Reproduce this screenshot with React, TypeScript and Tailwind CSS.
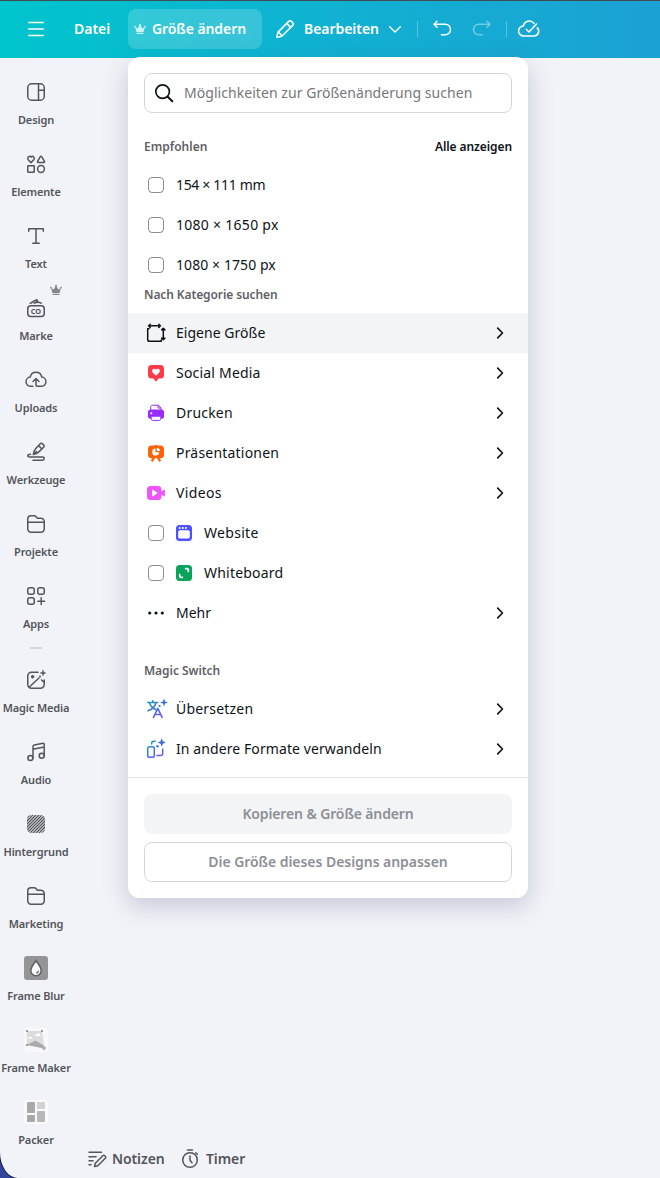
import { ReactNode } from 'react';
import clsx from 'clsx';

const Svg = ({ children, size = 24, className = '' }: { children: ReactNode; size?: number; className?: string }) => (
  <svg
    width={size}
    height={size}
    viewBox="0 0 24 24"
    fill="none"
    stroke="currentColor"
    strokeWidth={1.5}
    strokeLinecap="round"
    strokeLinejoin="round"
    className={clsx('shrink-0', className)}
  >
    {children}
  </svg>
);

const Crown = ({ className }: { className?: string }) => (
  <svg width="12" height="12" viewBox="0 0 12 12" fill="currentColor" className={clsx('shrink-0', className)}>
    <path d="M2.400 9 1.100 3.800 3.700 5.600 5.500 2.200h1L8.300 5.600l2.600-1.800L9.600 9z" />
    <circle cx="1" cy="3.600" r=".9" />
    <circle cx="6" cy="1.800" r="1" />
    <circle cx="11" cy="3.600" r=".9" />
    <rect x="2.500" y="9.800" width="7" height="1.200" rx=".5" />
  </svg>
);

const FolderIcon = () => (
  <Svg>
    <path d="M3.750 17V7A3.250 3.250 0 0 1 7 3.750h3.200c.7 0 1.300.3 1.700.8l1 1.200c.3.4.8.6 1.300.6H17A3.250 3.250 0 0 1 20.250 9.600V17A3.250 3.250 0 0 1 17 20.250H7A3.250 3.250 0 0 1 3.750 17zM3.750 10.300h16.500" />
  </Svg>
);

const Hatch = () => (
  <svg width="24" height="24" viewBox="0 0 24 24" fill="none" stroke="currentColor" strokeWidth="1.300">
    <defs>
      <clipPath id="hatch">
        <rect x="3" y="3" width="18" height="18" rx="4.500" />
      </clipPath>
    </defs>
    <path
      clipPath="url(#hatch)"
      d="M0 9 9 0M0 12 12 0M0 15 15 0M0 18 18 0M0 21 21 0M0 24 24 0M3 24 24 3M6 24 24 6M9 24 24 9M12 24 24 12M15 24 24 15"
    />
  </svg>
);

type Item = { label: string; icon: ReactNode; crown?: boolean };

const mainItems: Item[] = [
  {
    label: 'Design',
    icon: (
      <Svg>
        <rect x="3.750" y="3.750" width="16.500" height="16.500" rx="4" />
        <path d="M14.500 3.750v16.500M14.500 10.300h5.750" />
      </Svg>
    ),
  },
  {
    label: 'Elemente',
    icon: (
      <Svg>
        <path d="M7 10.600 4.200 7.800C2.700 6 5 2.900 7 5.100 9 2.900 11.300 6 9.800 7.800zM16.300 4.600l-2.700 4.700c-.3.6 0 1.100.6 1.100h5.600c.6 0 .9-.5.6-1.100l-2.700-4.700c-.3-.6-1.100-.6-1.400 0z" />
        <rect x="3.750" y="13.750" width="6.500" height="6.500" rx=".4" />
        <circle cx="17" cy="17" r="3.400" />
      </Svg>
    ),
  },
  {
    label: 'Text',
    icon: (
      <Svg>
        <path d="M4.700 7.300V4.800h14.600v2.500M12 4.800v14.500M8.800 19.300h6.400" />
      </Svg>
    ),
  },
  {
    label: 'Marke',
    crown: true,
    icon: (
      <Svg>
        <rect x="3.750" y="9.800" width="16.500" height="10.600" rx="3" />
        <path d="M6.300 7.300c2.200-.6 3.400-2.900 5.900-3.400.9-.2 1.500.4 1.200.9-.6 1-2.200 1.600-3.400 2.300 2-.5 4.500-1.700 7.200.1" />
        <text
          x="12"
          y="17.800"
          textAnchor="middle"
          stroke="none"
          fill="currentColor"
          textLength="10.400"
          lengthAdjust="spacingAndGlyphs"
          className="font-['Noto_Sans'] text-[7.500px] font-bold"
        >
          CO
        </text>
      </Svg>
    ),
  },
  {
    label: 'Uploads',
    icon: (
      <Svg>
        <path d="M8.800 18.300H7A4.600 4.600 0 0 1 6.300 9.100 5.800 5.800 0 0 1 17.700 9.100a4.600 4.600 0 0 1-.7 9.200h-3.800c-.8 0-1.200-.5-1.200-1.200v-6.300M9 13.500l3-3 3 3" />
      </Svg>
    ),
  },
  {
    label: 'Werkzeuge',
    icon: (
      <Svg>
        <path d="M9.300 14.600c.2-2.600 1-4.600 2.500-6.200l4.400-4.600c.7-.7 1.600-.7 2.300 0l1.100 1.100c.7.700.7 1.600 0 2.300l-4.500 4.400c-1.600 1.600-3.400 2.700-5.800 3zM14.600 5.600l3.400 3.400M12.400 11.500l-2.900 2.900M6.500 14.300c-3.500 0-3.500 2.600-.9 2.600h12.800c2.400 0 2.400 3.300 0 3.300H9" />
      </Svg>
    ),
  },
  { label: 'Projekte', icon: <FolderIcon /> },
  {
    label: 'Apps',
    icon: (
      <Svg>
        <rect x="3.750" y="3.750" width="6.500" height="6.500" rx="2" />
        <rect x="13.750" y="3.750" width="6.500" height="6.500" rx="2" />
        <rect x="3.750" y="13.750" width="6.500" height="6.500" rx="2" />
        <path d="M17.200 13.800v6.800M13.800 17.200h6.800" />
      </Svg>
    ),
  },
];

const appItems: Item[] = [
  {
    label: 'Magic Media',
    icon: (
      <Svg>
        <path d="M14 4.200H7.500a3.750 3.750 0 0 0-3.750 3.750v8.500a3.750 3.750 0 0 0 3.750 3.750h9a3.750 3.750 0 0 0 3.750-3.750V12M5 19.200 15 10M17.500 12l2.700 2.500" />
        <circle cx="8.600" cy="8.700" r="1.700" fill="currentColor" stroke="none" />
        <path d="M19 2.200 19.700 4.300 21.800 5 19.700 5.700 19 7.800 18.300 5.700 16.200 5 18.300 4.300z" fill="currentColor" strokeWidth=".5" />
        <circle cx="16" cy="8.600" r="1" fill="currentColor" stroke="none" />
      </Svg>
    ),
  },
  {
    label: 'Audio',
    icon: (
      <Svg>
        <path d="M9 17.800V6.600c0-.9.500-1.500 1.300-1.700l8.700-1.600c.7-.1 1.200.3 1.200 1v11.400M9 9.200l11.200-2.100" />
        <circle cx="6.400" cy="17.900" r="2.500" />
        <circle cx="17.700" cy="15.700" r="2.500" />
      </Svg>
    ),
  },
  { label: 'Hintergrund', icon: <Hatch /> },
  { label: 'Marketing', icon: <FolderIcon /> },
  {
    label: 'Frame Blur',
    icon: (
      <svg width="24" height="24" viewBox="0 0 24 24">
        <rect width="24" height="24" rx="3" fill="#959598" />
        <path d="M12 4.600c2 3.300 5.200 6.200 5.200 10a5.200 5.200 0 0 1-10.400 0c0-3.800 3.200-6.700 5.200-10z" fill="#fff" stroke="#606164" strokeWidth="1.600" />
        <path d="M14.500 14.500c0 1.500-1 2.400-2.500 2.600" fill="none" stroke="#77787b" strokeWidth="1.400" />
      </svg>
    ),
  },
  {
    label: 'Frame Maker',
    icon: (
      <svg width="24" height="24" viewBox="0 0 24 24">
        <rect width="24" height="24" rx="4" fill="#f8f8fa" />
        <path d="M3 3h15l2 16-17-2z" fill="#dcdcde" />
        <path d="M3 17 8 14.500 11 12.500 20 17.500v3z" fill="#aaaaac" />
        <path d="M4 10c0-1.500 1.500-1.500 2-.5 1-1 2.500-.3 2.500.9H4zM11 7.700c0-1.300 1.200-1.600 2-1.200.8-2 3-1 3 .3 1 0 1.200.9.800 1.200H11z" fill="#fff" />
        <path d="M2 2h2v2H2zM17 2h2v2h-2zM2 16h2v2H2z" fill="#9a9a9d" />
        <circle cx="20" cy="20" r="2" fill="#b4b4b6" />
      </svg>
    ),
  },
  {
    label: 'Packer',
    icon: (
      <svg width="24" height="24" viewBox="0 0 24 24">
        <rect width="24" height="24" rx="4" fill="#fafafc" />
        <rect x="3" y="2" width="8" height="11" rx=".8" fill="#aaaaac" />
        <rect x="13" y="2" width="8" height="7" rx=".8" fill="#d2d2d4" />
        <rect x="3" y="15" width="8" height="7" rx=".8" fill="#a8a8aa" />
        <rect x="13" y="11" width="8" height="11" rx=".8" fill="#b8b8ba" />
      </svg>
    ),
  },
];

const SideItem = ({ label, icon, crown }: Item) => (
  <div className="relative flex h-[72px] w-[72px] flex-col items-center pt-2">
    {icon}
    <span className="mt-2 text-[11px] font-semibold leading-4 tracking-[-0.14px] whitespace-nowrap">{label}</span>
    {crown && <Crown className="absolute top-[-4px] left-[50px] text-[#85878f]" />}
  </div>
);

const Checkbox = () => <span className="mx-1 size-4 shrink-0 rounded-[4px] border border-[#8b8d94] bg-white" />;

const Chevron = () => (
  <svg width="8" height="14" viewBox="0 0 8 14" fill="none" stroke="#0e1318" strokeWidth="1.600" strokeLinecap="round" strokeLinejoin="round" className="mr-2 ml-auto">
    <path d="m1.700 2.100 4.800 4.900-4.800 4.900" />
  </svg>
);

const SizeIcon = () => (
  <Svg className="text-[#0e1318]">
    <path d="M5 7.800H3.700v10.700c0 1.200.6 1.800 1.800 1.800h11.800v-1.200M5 4.800h11M6.200 3.200 4.600 4.800l1.600 1.600M14.800 3.200l1.600 1.600-1.600 1.600M19.300 7.500v11M17.700 8.900l1.600-1.600 1.600 1.600M17.700 17.100l1.600 1.600 1.600-1.600" />
  </Svg>
);

const SocialIcon = () => (
  <svg width="24" height="24" viewBox="0 0 24 24" className="shrink-0">
    <path d="M7.500 4h9A3.500 3.500 0 0 1 20 7.500V14a3.500 3.500 0 0 1-3.500 3.500h-2l-1.800 2.400c-.4.500-1 .5-1.400 0l-1.800-2.400h-2A3.500 3.500 0 0 1 4 14V7.500A3.500 3.500 0 0 1 7.500 4z" fill="#ff3b4b" />
    <path d="m12 14.700-3.300-3.200C6.900 9.300 9.800 6.300 12 8.700c2.200-2.400 5.100.6 3.300 2.800z" fill="#fff" />
  </svg>
);

const PrintIcon = () => (
  <svg width="24" height="24" viewBox="0 0 24 24" className="shrink-0">
    <path d="M6.700 9V6.200c0-1.200.8-2 2-2h5.500l2.800 2.600V9" fill="#fff" stroke="#992bff" strokeWidth="1" />
    <path d="M14 4.200V7h3" fill="none" stroke="#992bff" />
    <rect x="4" y="8.500" width="16" height="9.200" rx="2.500" fill="#992bff" />
    <circle cx="7.300" cy="12.200" r="1" fill="#fff" />
    <path d="M7.200 15.200h9.600v2.600c0 1-.6 1.600-1.600 1.600H8.800c-1 0-1.600-.6-1.600-1.600z" fill="#fff" stroke="#992bff" strokeWidth="1" />
  </svg>
);

const PresentationIcon = () => (
  <svg width="24" height="24" viewBox="0 0 24 24" className="shrink-0">
    <path d="m10.300 16-2.500 4.400M13.700 16l2.500 4.400" stroke="#ff6105" strokeWidth="2.200" />
    <rect x="4" y="4.500" width="16" height="12.700" rx="3.500" fill="#ff6105" />
    <circle cx="12" cy="4.700" r="1" fill="#ff6105" />
    <path d="M11.500 7.600v3.700h3.700a3.500 3.500 0 1 1-3.700-3.700z" fill="#fff" />
    <path d="M12.800 6.700a3.500 3.500 0 0 1 3.300 3.300h-3.300z" fill="#fff" />
  </svg>
);

const VideoIcon = () => (
  <svg width="24" height="24" viewBox="0 0 24 24" className="shrink-0">
    <rect x="3" y="5" width="14.500" height="14" rx="3.500" fill="#ed54fb" />
    <path d="m17 10.500 3.200-1.800c.4-.2.700 0 .7.400v5.800c0 .4-.3.600-.7.400L17 13.500z" fill="#ed54fb" />
    <path d="M8 9.200v5.600c0 .5.400.7.800.4l4.400-2.700c.4-.3.400-.7 0-1L8.800 8.800c-.4-.3-.8-.1-.8.400z" fill="#fff" />
  </svg>
);

const WebsiteIcon = () => (
  <svg width="24" height="24" viewBox="0 0 24 24" className="shrink-0">
    <rect x="4" y="4" width="16" height="16" rx="3.500" fill="#4d53fb" />
    <rect x="6.200" y="9.200" width="11.600" height="8.400" rx="1.900" fill="#fff" />
    <circle cx="7.700" cy="7" r="1" fill="#fff" />
    <circle cx="10.800" cy="7" r="1" fill="#fff" />
    <circle cx="13.900" cy="7" r="1" fill="#fff" />
  </svg>
);

const WhiteboardIcon = () => (
  <svg width="24" height="24" viewBox="0 0 24 24" className="shrink-0">
    <rect x="4" y="4" width="16" height="16" rx="3.500" fill="#0aa35b" />
    <path d="M13.700 7.700h1.400c.7 0 1.200.5 1.200 1.200v1.400M10.300 16.300H8.900c-.7 0-1.200-.5-1.200-1.200v-1.400" fill="none" stroke="#fff" strokeWidth="1.800" strokeLinecap="round" />
  </svg>
);

const MoreIcon = () => (
  <svg width="24" height="24" viewBox="0 0 24 24" fill="#0e1318" className="shrink-0">
    <circle cx="5.700" cy="12" r="1.600" />
    <circle cx="12" cy="12" r="1.600" />
    <circle cx="18.300" cy="12" r="1.600" />
  </svg>
);

const TranslateIcon = () => (
  <svg width="24" height="24" viewBox="0 0 24 24" fill="none" strokeWidth="1.600" strokeLinecap="round" strokeLinejoin="round" className="shrink-0 overflow-visible">
    <defs>
      <linearGradient id="magicA" x1="4" y1="3" x2="17" y2="21" gradientUnits="userSpaceOnUse">
        <stop stopColor="#12a5b8" />
        <stop offset=".5" stopColor="#3b74d8" />
        <stop offset="1" stopColor="#8052ff" />
      </linearGradient>
    </defs>
    <path stroke="url(#magicA)" d="M3.700 5.500h10M8.700 3.800v1.700M5.500 5.800c1 3.500 3.500 5.600 6 6.700M12 5.800c-1 3.800-3.800 6.700-8 8M9.500 20.300l4.300-9 4.300 9M11 17.500h5.600" />
    <path d="M20 1.500 21.100 4.400 24 5.500 21.100 6.600 20 9.500 18.900 6.600 16 5.500 18.900 4.400z" fill="#3d70d8" />
    <circle cx="15.600" cy="9" r="1.100" fill="#3d70d8" />
  </svg>
);

const ConvertIcon = () => (
  <svg width="24" height="24" viewBox="0 0 24 24" fill="none" strokeWidth="1.500" strokeLinecap="round" strokeLinejoin="round" className="shrink-0">
    <defs>
      <linearGradient id="magicB" x1="4" y1="3" x2="18" y2="21" gradientUnits="userSpaceOnUse">
        <stop stopColor="#12a5b8" />
        <stop offset=".5" stopColor="#3b74d8" />
        <stop offset="1" stopColor="#8052ff" />
      </linearGradient>
    </defs>
    <g stroke="url(#magicB)">
      <rect x="3.700" y="9.700" width="6.600" height="10.600" rx="1.800" />
      <path d="M7.700 7v-.8c0-1.200.8-2 2-2h1.500M13 18.400h3.700c1.200 0 2-.8 2-2V12" />
    </g>
    <path d="M17.700 1.300 18.900 4.300 21.800 5.500 18.900 6.700 17.700 9.700 16.500 6.700 13.600 5.500 16.500 4.300z" fill="#3d70d8" />
    <circle cx="13.500" cy="9.300" r="1.200" fill="#3d70d8" />
  </svg>
);

type RowProps = { label: string; icon?: ReactNode; check?: boolean; arrow?: boolean; active?: boolean; spacing?: string };

const Row = ({ label, icon, check, arrow, active, spacing = 'tracking-[0.2px]' }: RowProps) => (
  <div className={clsx('flex h-10 items-center px-4', active && 'bg-[#f3f4f6]')}>
    {check && <Checkbox />}
    {check && icon && <span className="w-1" />}
    {icon}
    <span className={clsx('ml-2 text-[14px] leading-5 whitespace-nowrap text-[#0e1318]', spacing)}>{label}</span>
    {arrow && <Chevron />}
  </div>
);

const ResizeMenu = () => (
  <div className="absolute top-[57px] left-32 flex h-[841px] w-[400px] flex-col overflow-hidden rounded-xl bg-white">
    <div className="mx-4 mt-4 flex h-10 shrink-0 items-center rounded-lg border border-[#d5d6dd] px-[7px]">
      <Svg className="text-[#0e1318]">
        <circle cx="10.600" cy="10.600" r="6.800" strokeWidth="1.700" />
        <path d="m15.700 15.700 4.600 4.600" strokeWidth="2" />
      </Svg>
      <span className="ml-2 pb-0.5 text-[14px] tracking-[0.05px] text-[#75767b]">Möglichkeiten zur Größenänderung suchen</span>
    </div>
    <div className="mt-6 mb-2 flex h-5 shrink-0 items-center justify-between px-4 text-[12px] font-semibold">
      <span className="text-[#5f6167]">Empfohlen</span>
      <span className="tracking-[-0.08px] text-[#0e1318]">Alle anzeigen</span>
    </div>
    <Row check label="154 × 111 mm" spacing="tracking-[-0.33px]" />
    <Row check label="1080 × 1650 px" spacing="tracking-[0.28px]" />
    <Row check label="1080 × 1750 px" spacing="tracking-[0.08px]" />
    <div className="mb-2 h-5 shrink-0 px-4 text-[12px] leading-5 font-semibold tracking-[-0.1px] text-[#5f6167]">Nach Kategorie suchen</div>
    <Row arrow active icon={<SizeIcon />} label="Eigene Größe" spacing="tracking-[0.03px]" />
    <Row arrow icon={<SocialIcon />} label="Social Media" />
    <Row arrow icon={<PrintIcon />} label="Drucken" />
    <Row arrow icon={<PresentationIcon />} label="Präsentationen" />
    <Row arrow icon={<VideoIcon />} label="Videos" spacing="tracking-[0.35px]" />
    <Row check icon={<WebsiteIcon />} label="Website" spacing="tracking-[0.3px]" />
    <Row check icon={<WhiteboardIcon />} label="Whiteboard" />
    <Row arrow icon={<MoreIcon />} label="Mehr" spacing="tracking-normal" />
    <div className="mt-7 mb-2 h-5 shrink-0 px-4 text-[12px] leading-5 font-semibold tracking-[-0.05px] text-[#5f6167]">Magic Switch</div>
    <Row arrow icon={<TranslateIcon />} label="Übersetzen" />
    <Row arrow icon={<ConvertIcon />} label="In andere Formate verwandeln" spacing="tracking-[0.09px]" />
    <div className="mt-2 flex flex-col gap-2 border-t border-[#e0e1e5] p-4 text-[14px] font-semibold text-[#8d8f96]">
      <button className="h-10 rounded-lg bg-[#f3f4f6] pb-0.5 tracking-[-0.13px]">Kopieren &amp; Größe ändern</button>
      <button className="h-10 rounded-lg border border-[#d5d6dd] pb-0.5 tracking-[-0.05px]">Die Größe dieses Designs anpassen</button>
    </div>
  </div>
);

const Header = () => (
  <header className="flex h-[58px] shrink-0 items-center border-t border-[#414a52] bg-linear-to-r from-[#00c5cc] via-[#10b1d2] to-[#1ba1d4] pb-px text-[14px] font-semibold text-white">
    <Svg className="ml-6">
      <path d="M4.200 5.500h15.600M4.200 12h15.600M4.200 18.500h15.600" strokeLinecap="butt" />
    </Svg>
    <span className="ml-[26px] w-[54px] pb-px">Datei</span>
    <div className="flex h-10 w-[134px] items-center rounded-lg bg-white/18 pl-[6px]">
      <Crown className="text-white/75" />
      <span className="ml-[6px] pb-px tracking-[-0.08px] whitespace-nowrap">Größe ändern</span>
    </div>
    <Svg className="ml-[11px]">
      <path d="M3.800 20.300c.3-2 .8-3.900 1.300-5.200L15.700 4.400c.8-.8 2-.8 2.800 0l1.200 1.200c.8.8.8 2 0 2.800L9.100 19c-1.500.7-3.400 1.100-5.300 1.300zM13.700 6.400l4 4M5.300 15l3.800 3.800" />
    </Svg>
    <span className="ml-[7px] w-[76px] pb-px tracking-[-0.05px]">Bearbeiten</span>
    <Svg size={16} className="ml-[7px]">
      <path d="m4 8.500 8 8 8-8" strokeWidth="2" />
    </Svg>
    <span className="ml-[14px] h-4 w-px bg-white/30" />
    <Svg className="ml-3">
      <path d="M4 7.300h11.300a5.200 5.200 0 0 1 0 10.400H11.500M7 4.300l-3 3 3 3" />
    </Svg>
    <Svg className="ml-4 opacity-40">
      <path d="M20 7.300H8.700a5.200 5.200 0 0 0 0 10.400H12.500M17 4.300l3 3-3 3" />
    </Svg>
    <span className="ml-3 h-4 w-px bg-white/30" />
    <Svg className="ml-[10px]">
      <path d="M17 6.500A6 6 0 0 0 6.300 9 4.700 4.700 0 0 0 6.700 18.900h10.600a4.700 4.700 0 0 0 3-8M9.300 12.300l2.700 2.700 7.500-8" />
    </Svg>
  </header>
);

export default function App() {
  return (
    <div className="h-[1178px] w-[660px] overflow-hidden bg-[#32449b] font-['Noto_Sans',sans-serif]">
      <div className="relative flex h-full flex-col overflow-hidden rounded-bl-[18px_26px] bg-[#f2f3f8] shadow-[0_0_0_1px_#141c3c]">
        <Header />
        <div className="flex flex-1">
          <aside className="flex w-[72px] flex-col pt-[14px] text-[#53555b]">
            {mainItems.map((item) => (
              <SideItem key={item.label} {...item} />
            ))}
            <div className="mt-[-1px] mb-[11px] h-[2px] w-3 shrink-0 self-center bg-[#d5d6de]" />
            {appItems.map((item) => (
              <SideItem key={item.label} {...item} />
            ))}
          </aside>
          <main className="flex flex-1 flex-col justify-end">
            {/* Footer tools */}
            <div className="flex h-[38px] items-center pl-[13px] text-[14px] font-semibold text-[#53555b]">
              <Svg>
                <path d="M4 5.200h12.500M4 9.800h7M4 13.700h4M4 17.700h2M9.500 19.500l.8-3.300 7.500-7.500c.6-.6 1.400-.6 2 0l.5.5c.6.6.6 1.400 0 2l-7.500 7.500z" />
              </Svg>
              <span className="ml-[3px] w-[54px] pb-0.5 tracking-[-0.1px]">Notizen</span>
              <Svg className="ml-[12px]">
                <circle cx="12" cy="13" r="7.300" />
                <path d="M9.500 3.100h5M12 9v4.200l2 2.500M17.800 5.700l1.500 1.500" />
              </Svg>
              <span className="ml-1 pb-0.5 tracking-[-0.1px]">Timer</span>
            </div>
          </main>
        </div>
        <div className="absolute top-[57px] left-32 h-[841px] w-[400px] rounded-xl shadow-[0_8px_24px_rgba(57,76,110,0.25)]" />
        <ResizeMenu />
      </div>
    </div>
  );
}
